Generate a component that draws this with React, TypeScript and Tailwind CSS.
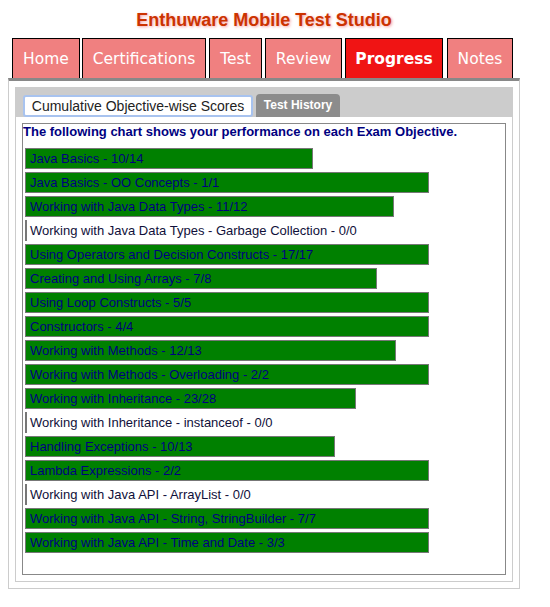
import React from 'react';

type Row = { label: string; got: number; total: number };

const rows: Row[] = [
  { label: 'Java Basics', got: 10, total: 14 },
  { label: 'Java Basics - OO Concepts', got: 1, total: 1 },
  { label: 'Working with Java Data Types', got: 11, total: 12 },
  { label: 'Working with Java Data Types - Garbage Collection', got: 0, total: 0 },
  { label: 'Using Operators and Decision Constructs', got: 17, total: 17 },
  { label: 'Creating and Using Arrays', got: 7, total: 8 },
  { label: 'Using Loop Constructs', got: 5, total: 5 },
  { label: 'Constructors', got: 4, total: 4 },
  { label: 'Working with Methods', got: 12, total: 13 },
  { label: 'Working with Methods - Overloading', got: 2, total: 2 },
  { label: 'Working with Inheritance', got: 23, total: 28 },
  { label: 'Working with Inheritance - instanceof', got: 0, total: 0 },
  { label: 'Handling Exceptions', got: 10, total: 13 },
  { label: 'Lambda Expressions', got: 2, total: 2 },
  { label: 'Working with Java API - ArrayList', got: 0, total: 0 },
  { label: 'Working with Java API - String, StringBuilder', got: 7, total: 7 },
  { label: 'Working with Java API - Time and Date', got: 3, total: 3 },
];

const tabs = [
  { name: 'Home', cls: 'w-[68px]' },
  { name: 'Certifications', cls: 'w-[124px] ml-[2px]' },
  { name: 'Test', cls: 'w-[53px] ml-[3px]' },
  { name: 'Review', cls: 'w-[77px] ml-[3px]' },
  { name: 'Progress', cls: 'w-[98px] ml-[3px]', active: true },
  { name: 'Notes', cls: 'w-[66px] ml-[4px]' },
];

const ScoreBar: React.FC<{ row: Row }> = ({ row }) => {
  const text = `${row.label} - ${row.got}/${row.total}`;
  if (row.total === 0) {
    // nothing answered for this objective, only the left marker is shown
    return (
      <div className="h-[21px] border-l-2 border-[#777] pl-[3px] text-[13px] leading-[21px] text-[#10103a] whitespace-nowrap">
        {text}
      </div>
    );
  }
  const width = row.got === row.total ? 404 : Math.round((row.got / row.total) * 400) + 2;
  return (
    <div
      className="h-[21px] border border-[#777] bg-[#008000] pl-[4px] text-[13px] leading-[19px] text-[#000080] whitespace-nowrap"
      style={{ width }}
    >
      {text}
    </div>
  );
};

export default function App() {
  return (
    <div className="w-[528px] bg-white font-['Liberation_Sans',Arial,sans-serif]">
      <h1 className="h-[38px] pt-[9px] text-center text-[18px] leading-[22px] font-bold text-[#cc3300] [text-shadow:1px_1px_3px_#f4a0a0]">
        Enthuware Mobile Test Studio
      </h1>

      <div className="flex h-[40px] pl-[12px]">
        {tabs.map((t) => (
          <div
            key={t.name}
            className={`${t.cls} flex items-center justify-center pt-[2px] border border-b-0 border-black text-white text-[15.5px] font-['DejaVu_Sans',Verdana,sans-serif] ${
              t.active ? 'bg-[#f01414] font-bold' : 'bg-[#f08080]'
            }`}
          >
            {t.name}
          </div>
        ))}
      </div>

      <div className="mx-[8px] border-t-[3px] border-t-[#888] border-x border-b border-x-[#ccc] border-b-[#ccc] p-[6px]">
        <div className="border border-[#ccc]">
          <div className="flex items-end h-[29px] bg-[#ccc] pl-[7px]">
            <div className="w-[230px] h-[22px] bg-white border-2 border-[#a8c3ef] rounded-[3px] text-center text-[14px] leading-[18px] text-[#222]">
              Cumulative Objective-wise Scores
            </div>
            <div className="w-[84px] h-[23px] ml-[3px] bg-[#8c8c8c] rounded-t-[4px] text-center text-[12px] leading-[23px] font-bold text-white">
              Test History
            </div>
          </div>
          <div className="p-[6px]">
            <div className="h-[452px] border border-[#888]">
              <p className="text-[13px] leading-[16px] font-bold text-[#000080]">
                The following chart shows your performance on each Exam Objective.
              </p>
              <div className="mt-[8px] ml-[2px] flex flex-col gap-[3px]">
                {rows.map((r) => (
                  <ScoreBar key={r.label} row={r} />
                ))}
              </div>
            </div>
          </div>
        </div>
      </div>
    </div>
  );
}
